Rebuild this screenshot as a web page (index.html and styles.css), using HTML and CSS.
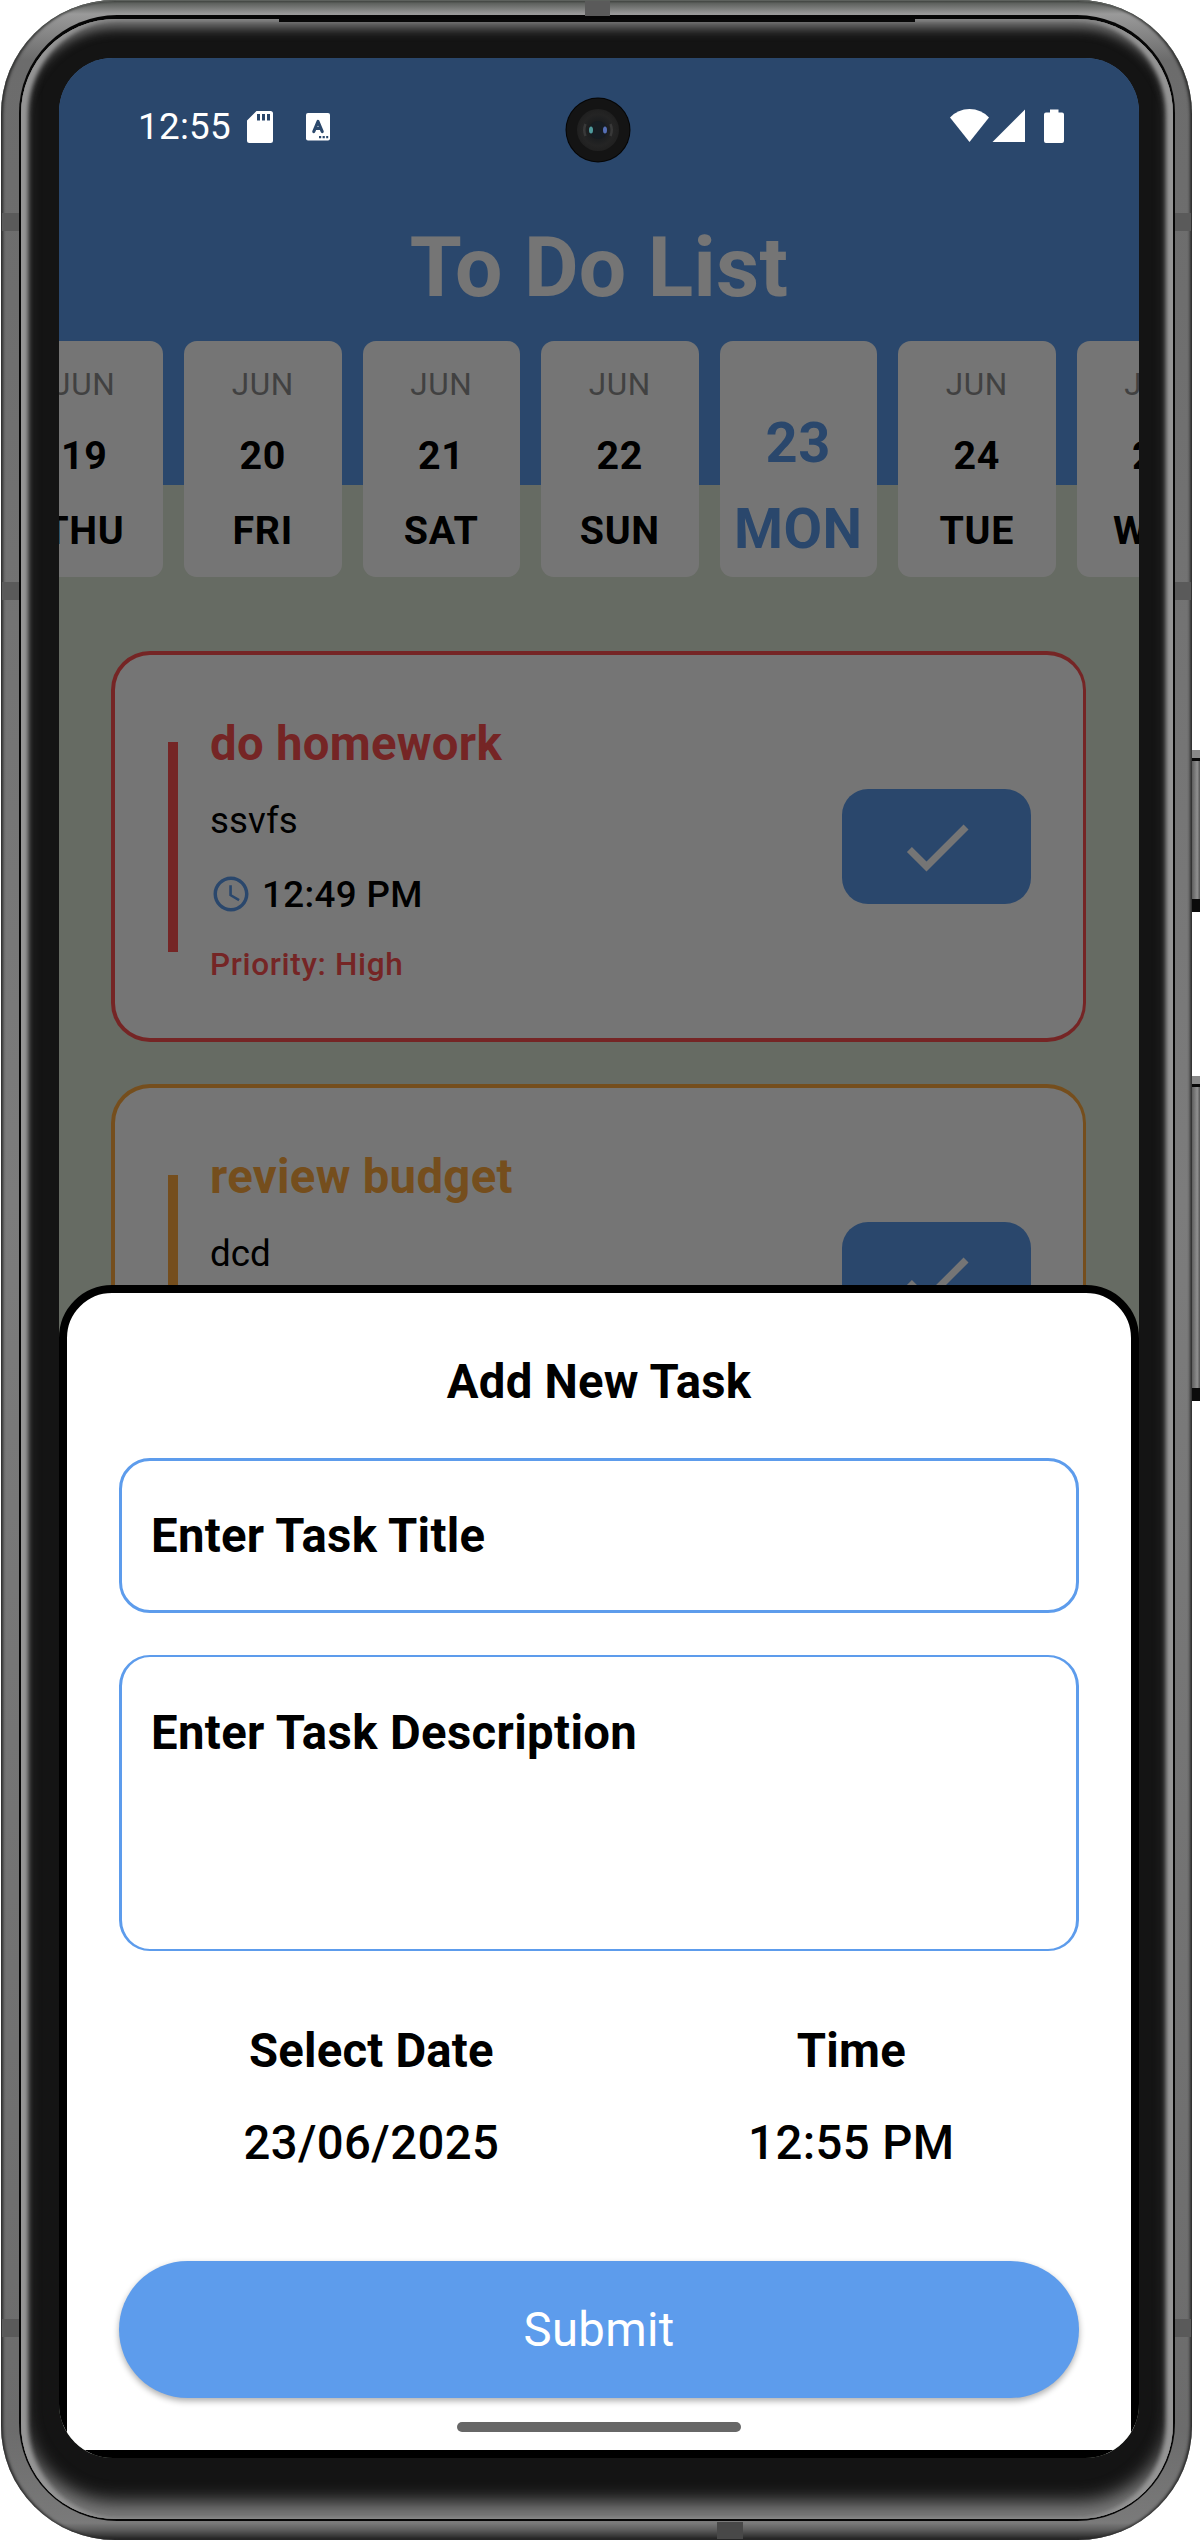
FILE: index.html
```html
<!DOCTYPE html>
<html lang="en">
<head>
<meta charset="utf-8">
<title>To Do List</title>
<link rel="stylesheet" href="styles.css">
</head>
<body>
<div class="device">
  <i class="key key-power"></i>
  <i class="key key-volume"></i>
  <div class="chassis">
    <i class="seam seam-top"></i>
    <i class="seam seam-bottom"></i>
    <i class="seam seam-left s1"></i>
    <i class="seam seam-left s2"></i>
    <i class="seam seam-left s3"></i>
    <i class="seam seam-right s1"></i>
    <i class="seam seam-right s2"></i>
    <i class="seam seam-right s3"></i>
    <div class="gasket">
      <div class="bezel">
        <i class="speaker"></i>
        <main class="screen">
          <header class="statusbar">
            <span class="clock">12:55</span>
            <svg class="sd" width="26" height="32" viewBox="0 0 26 32"><path fill="#fff" fill-rule="evenodd" d="M9.500 0H23.500Q26 0 26 2.500V29.500Q26 32 23.500 32H2.500Q0 32 0 29.500V9.500ZM10 3V9.500H13V3ZM15 3V9.500H18V3ZM20 3V9.500H23V3Z"/></svg>
            <svg class="kbd" width="24" height="28" viewBox="0 0 24 28"><rect width="24" height="27.500" rx="2" fill="#fff"/><path d="M7.800 18.500L12 8.500L16.200 18.500M9 15.500H15" fill="none" stroke="#2b486c" stroke-width="3.200" stroke-linecap="round" stroke-linejoin="round"/><path d="M13 23h2.200v2.200H13zM16.600 23h2.200v2.200h-2.200zM20.200 23h2v2.200h-2z" fill="#2b486c"/></svg>
            <svg class="signals" width="115" height="36" viewBox="0 0 115 36"><g fill="#fff"><path d="M0 9.500Q8 1 19.500 1T39 9.500L19.500 34Z"/><path d="M42.500 34L75 1.500V34Z"/><path d="M100 1.500h8.500v3h3.500q2 0 2 2v26.500q0 2-2 2H96q-2 0-2-2V6.500q0-2 2-2h4z"/></g></svg>
          </header>

          <h1 class="title">To Do List</h1>

          <section class="days">
            <div class="day"><span class="month">JUN</span><b>19</b><b>THU</b></div>
            <div class="day"><span class="month">JUN</span><b>20</b><b>FRI</b></div>
            <div class="day"><span class="month">JUN</span><b>21</b><b>SAT</b></div>
            <div class="day"><span class="month">JUN</span><b>22</b><b>SUN</b></div>
            <div class="day selected"><b>23</b><b>MON</b></div>
            <div class="day"><span class="month">JUN</span><b>24</b><b>TUE</b></div>
            <div class="day"><span class="month">JUN</span><b>25</b><b>WED</b></div>
          </section>

          <section class="tasks">
            <article class="task high">
              <i class="bar"></i>
              <div class="info">
                <h2>do homework</h2>
                <p class="desc">ssvfs</p>
                <p class="time"><svg width="42" height="42" viewBox="0 0 24 24"><path fill="#5d9cec" d="M11.990 2C6.470 2 2 6.480 2 12s4.470 10 9.990 10C17.520 22 22 17.520 22 12S17.520 2 11.990 2zM12 20c-4.420 0-8-3.580-8-8s3.580-8 8-8 8 3.580 8 8-3.580 8-8 8zm.500-13H11v6l5.250 3.150.750-1.230-4.500-2.670z"/></svg>12:49 PM</p>
                <p class="priority">Priority: High</p>
              </div>
              <div class="done"><svg width="84" height="84" viewBox="0 0 24 24"><path fill="#fff" d="M9 16.170L4.830 12l-1.420 1.410L9 19 21 7l-1.410-1.410z"/></svg></div>
            </article>
            <article class="task medium">
              <i class="bar"></i>
              <div class="info">
                <h2>review budget</h2>
                <p class="desc">dcd</p>
              </div>
              <div class="done"><svg width="84" height="84" viewBox="0 0 24 24"><path fill="#fff" d="M9 16.170L4.830 12l-1.420 1.410L9 19 21 7l-1.410-1.410z"/></svg></div>
            </article>
          </section>

          <div class="scrim"></div>

          <section class="sheet">
            <h3>Add New Task</h3>
            <div class="field field-title">Enter Task Title</div>
            <div class="field field-desc">Enter Task Description</div>
            <div class="when">
              <div class="pick"><strong>Select Date</strong><span>23/06/2025</span></div>
              <div class="pick"><strong>Time</strong><span>12:55 PM</span></div>
            </div>
            <div class="submit">Submit</div>
          </section>

          <i class="homebar"></i>
          <svg class="camera" width="66" height="66" viewBox="0 0 66 66">
            <defs>
              <radialGradient id="lens"><stop offset="0" stop-color="#1a2024"/><stop offset=".4" stop-color="#1b1d1f"/><stop offset=".75" stop-color="#242424"/><stop offset="1" stop-color="#202020"/></radialGradient>
            </defs>
            <circle cx="33" cy="33" r="32.500" fill="#050505"/><circle cx="33" cy="33" r="31.500" fill="#141414"/>
            <circle cx="33" cy="33" r="21" fill="url(#lens)"/>
            <path d="M20.500 27q-2.500 6 0 12M45.500 27q2.500 6 0 12" stroke="#383838" stroke-width="2.500" fill="none"/>
            <circle cx="33" cy="33" r="9" fill="#161c22"/>
            <ellipse cx="26" cy="33" rx="2" ry="3.500" fill="#4f9a9c"/><ellipse cx="40" cy="33" rx="2" ry="3.500" fill="#566fb5"/>
          </svg>
        </main>
      </div>
    </div>
  </div>
</div>
</body>
</html>
```
FILE: styles.css
```css
* { box-sizing: border-box; margin: 0; padding: 0; }
body { background: #fff; font-family: Roboto, "Liberation Sans", sans-serif; color: #000; }
i { display: block; }
svg { display: block; flex: none; }

/* Phone body */
.device { position: relative; width: 1200px; height: 2541px; padding-left: 1px; overflow: hidden; }
.chassis {
  position: relative; width: 1191px; height: 2540px; padding: 15px 17px 19px 18px;
  border-radius: 114px;
  background: linear-gradient(#4b4f4b 0, #9a9a9a 14px, #6c6c6c 60px, #6e6e6e 300px, #7c7c7c 1200px, #6c6c6c 2430px, #7a7a7a 2523px, #5c5c5c 2530px, #202020 2540px);
  box-shadow: inset 2px 0 3px #2a2a2a, inset -2px 0 3px #2a2a2a, inset 0 1px 0 #a8b0a8;
}
.gasket { height: 2506px; padding: 4px 2px 2px; border-radius: 98px; background: #060606; }
.bezel {
  position: relative; height: 2500px; padding: 39px 34px 61px 38px; border-radius: 95px; background: #141414;
  box-shadow: inset 8px 0 4px -1px #959595, inset -8px 0 4px -1px #959595, inset 0 9px 12px #777, inset 0 -17px 18px #7c7c7c, inset 0 0 3px 3px #777;
}
.speaker { position: absolute; left: 258px; top: 0; width: 636px; height: 3px; background: #080808; }
.seam { position: absolute; background: #5a5a5a; }
.seam-top { left: 584px; top: 1px; width: 25px; height: 15px; }
.seam-bottom { left: 716px; bottom: 1px; width: 26px; height: 17px; background: #484848; }
.seam-left { left: 1px; width: 17px; height: 18px; }
.seam-right { right: 1px; width: 16px; height: 18px; }
.s1 { top: 213px; }
.s2 { top: 582px; }
.s3 { top: 2319px; }
.key { position: absolute; right: 0; width: 9px; background: linear-gradient(90deg, #555, #909090 70%, #555); border-top: 8px solid #888; border-bottom: 13px solid #0b0b0b; }
.key::before { content: ""; display: block; height: 3px; background: #080808; }
.key-power { top: 750px; height: 162px; }
.key-volume { top: 1076px; height: 325px; }

/* Screen */
.screen {
  position: relative; display: flex; flex-direction: column; width: 1080px; height: 2400px;
  overflow: hidden; border-radius: 54px;
  background: linear-gradient(#5d9cec 427px, #dee9d7 427px);
}
.statusbar { position: relative; z-index: 2; display: flex; align-items: center; height: 136px; padding: 0 74px 0 79px; color: #fff; }
.clock { width: 109px; font-size: 36.75px; letter-spacing: .3px; }
.sd { margin-top: 2px; }
.kbd { margin-left: 33px; margin-top: 2px; }
.signals { margin-left: auto; }
.title { height: 147px; line-height: 147px; text-align: center; font-size: 84px; font-weight: 700; color: #fff; letter-spacing: .3px; }

.days { display: flex; flex: none; gap: 21px; height: 236px; margin-left: -53.5px; }
.day {
  display: flex; flex: none; flex-direction: column; align-items: center; justify-content: space-between;
  width: 157.5px; padding: 25px 0 23px; border-radius: 13px; background: #fff;
  font-size: 39.375px; line-height: 46px; letter-spacing: .7px;
}
.day .month { font-size: 31.5px; line-height: 37px; color: #8f8f8f; letter-spacing: .5px; }
.day.selected { padding: 69px 0 15px; color: #5d9cec; font-size: 56px; line-height: 66px; letter-spacing: .5px; }

/* Tasks */
.tasks { display: flex; flex: none; flex-direction: column; gap: 42px; margin: 74px 52px 0 52px; width: 975px; }
.task { display: flex; align-items: center; height: 391px; padding: 0 52px 0 53px; border: 4px solid; border-right-width: 3px; border-radius: 39px; background: #fff; }
.high { border-color: #ff5252; color: #ff5252; }
.medium { border-color: #ffab40; color: #ffab40; }
.bar { width: 10px; height: 210px; background: currentColor; }
.info { display: flex; flex: 1; flex-direction: column; align-self: stretch; margin-left: 32px; padding-top: 61.5px; }
.info h2 { font-size: 47.25px; line-height: 55px; font-weight: 700; letter-spacing: .32px; }
.desc { margin-top: 27px; font-size: 36.75px; line-height: 43px; color: #000; }
.time { display: flex; align-items: center; gap: 10px; margin-top: 31px; font-size: 36.75px; line-height: 43px; height: 43px; font-weight: 500; color: #000; letter-spacing: .35px; }
.priority { margin-top: 30px; font-size: 31.5px; line-height: 37px; font-weight: 500; letter-spacing: .66px; }
.done { display: flex; align-items: center; justify-content: center; width: 189px; height: 115px; border-radius: 26px; background: #5d9cec; }

.scrim { position: absolute; inset: 0; z-index: 1; background: rgba(0, 0, 0, .54); }

/* Bottom sheet */
.sheet {
  position: absolute; left: 0; right: 0; bottom: 0; z-index: 2; height: 1173px; padding: 61px 52px 0;
  border: 8px solid #000; border-radius: 53px 53px 0 0; background: #fff;
  font-size: 47.25px; line-height: 56px; letter-spacing: .32px;
}
.sheet h3 { text-align: center; font-size: 47.25px; font-weight: 700; letter-spacing: .25px; }
.field { border: 3px solid #5d9cec; border-radius: 31px; font-weight: 700; }
.field-title { margin-top: 48px; height: 155px; padding: 46.5px 29px; }
.field-desc { margin-top: 42px; height: 296px; padding: 48px 29px; border-top-width: 2px; border-bottom-width: 2px; letter-spacing: .38px; }
.when { display: flex; justify-content: space-around; margin-top: 72px; }
.pick { display: flex; flex-direction: column; align-items: center; gap: 36px; }
.pick strong { font-weight: 700; letter-spacing: .2px; }
.pick span { font-weight: 500; letter-spacing: .42px; }
.submit {
  margin-top: 90px; height: 137px; line-height: 138px; border-radius: 69px; background: #5d9cec;
  color: #fff; text-align: center; box-shadow: 0 3px 6px rgba(0, 0, 0, .32);
}
.homebar { position: absolute; z-index: 3; left: 398px; bottom: 26px; width: 284px; height: 10px; border-radius: 5px; background: #676767; }
.camera { position: absolute; z-index: 3; left: 506px; top: 39px; }
```
